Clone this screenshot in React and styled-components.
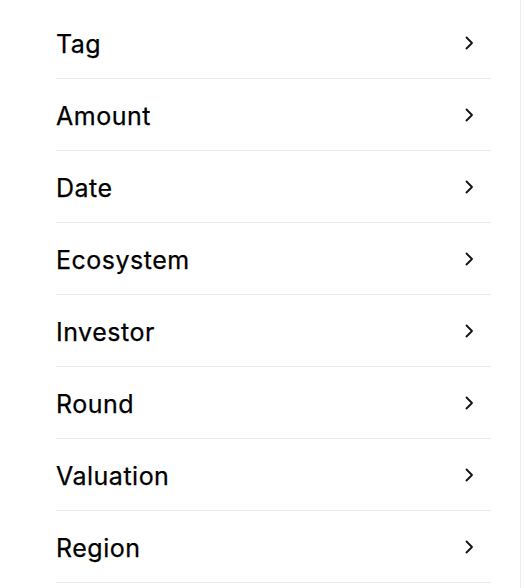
import React from "react";
import styled, { createGlobalStyle } from "styled-components";

const GlobalStyle = createGlobalStyle`
  html, body {
    margin: 0;
    padding: 0;
    background: #ffffff;
  }
  body {
    font-family: Inter, "Noto Sans", sans-serif;
    -webkit-font-smoothing: antialiased;
  }
`;

const Panel = styled.aside`
  width: 521px;
  min-height: 588px;
  box-sizing: border-box;
  border-right: 1px solid #ececec;
  padding: 7px 29px 0 56px;
  background: #ffffff;
`;

const List = styled.ul`
  list-style: none;
  margin: 0;
  padding: 0;
`;

const Row = styled.li`
  height: 72px;
  box-sizing: border-box;
  display: flex;
  align-items: center;
  justify-content: space-between;
  padding-top: 3px;
  border-bottom: 1px solid #ebebeb;
  cursor: pointer;
`;

const Label = styled.span`
  font-size: 25px;
  font-weight: 400;
  color: #000000;
  letter-spacing: 0.5px;
  -webkit-text-stroke: 0.25px #000000;
`;

const Chevron = styled.svg`
  width: 14px;
  height: 14px;
  margin-right: 15px;
  margin-bottom: 3px;
  flex-shrink: 0;
`;

const filters = [
  "Tag",
  "Amount",
  "Date",
  "Ecosystem",
  "Investor",
  "Round",
  "Valuation",
  "Region",
];

const App = () => (
  <>
    <GlobalStyle />
    <Panel>
      <List>
        {filters.map((name) => (
          <Row key={name}>
            <Label>{name}</Label>
            <Chevron viewBox="0 0 14 14" fill="none">
              <path
                d="M4.5 1.5L10 7L4.5 12.5"
                stroke="#111"
                strokeWidth="1.8"
                strokeLinecap="round"
                strokeLinejoin="round"
              />
            </Chevron>
          </Row>
        ))}
      </List>
    </Panel>
  </>
);

export default App;
